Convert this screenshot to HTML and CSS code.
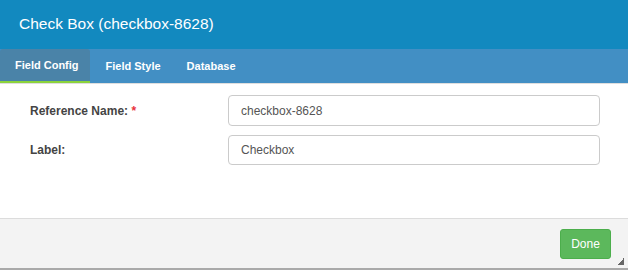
FILE: index.html
```html
<!DOCTYPE html>
<html lang="en">
<head>
  <meta charset="UTF-8" />
  <title>Check Box (checkbox-8628)</title>
  <link rel="stylesheet" href="styles.css">
</head>
<body>
  <div class="dialog">
    <header class="dlg-head">Check Box (checkbox-8628)</header>

    <nav class="tabs">
      <a class="tab active">Field Config</a>
      <a class="tab">Field Style</a>
      <a class="tab">Database</a>
    </nav>

    <main class="dlg-body">
      <div class="row">
        <label for="refName">Reference Name: <span class="req">*</span></label>
        <input type="text" id="refName" value="checkbox-8628" />
      </div>
      <div class="row">
        <label for="lbl">Label:</label>
        <input type="text" id="lbl" value="Checkbox" />
      </div>
    </main>

    <footer class="dlg-foot">
      <button class="btn-done">Done</button>
      <span class="grip"></span>
    </footer>
  </div>
</body>
</html>
```

FILE: styles.css
```css
/* ---------- base ---------- */
*,*::before,*::after{box-sizing:border-box;}
body{
  margin:0;
  font-family:"Liberation Sans",Arial,sans-serif;
  background:#fff;
  color:#333;
}

.dialog{
  width:628px;
  height:270px;
  display:flex;
  flex-direction:column;
  border-bottom:2px solid #a9a9a9;
}

/* ---------- header ---------- */
.dlg-head{
  height:49px;
  background:#1289bf;
  color:#fff;
  font-size:15.5px;
  line-height:47px;
  padding-left:19px;
}

/* ---------- tabs ---------- */
.tabs{
  height:35px;
  display:flex;
  background:#428fc4;
  border-bottom:1px solid #dedede;
}
.tab{
  padding:0 13px;
  line-height:34px;
  color:#fff;
  font-size:11px;
  font-weight:bold;
  white-space:nowrap;
  cursor:pointer;
}
.tab:nth-child(2){padding-left:16px;}
.tab.active{
  padding:0 11px 0 15px;
  background:#4a83a8;
  border-radius:3px 3px 0 0;
  border-bottom:2px solid #8bd33b;
  line-height:32px;
}

/* ---------- form ---------- */
.dlg-body{
  flex:1;
  padding:11px 28px 0 30px;
  display:flex;
  flex-direction:column;
  gap:9px;
}
.row{
  display:flex;
  align-items:center;
}
.row label{
  width:198px;
  font-size:12px;
  font-weight:bold;
  color:#444;
}
.req{color:#e8313b;}
.row input{
  flex:1;
  height:31px;
  padding:0 12px;
  border:1px solid #cbcbcb;
  border-radius:4px;
  font-family:inherit;
  font-size:12px;
  color:#555;
  outline:none;
}
.row:last-child input{height:30px;}

/* ---------- footer ---------- */
.dlg-foot{
  height:50px;
  background:#f3f3f3;
  border-top:1px solid #dcdcdc;
  display:flex;
  justify-content:flex-end;
  align-items:flex-start;
  padding:10px 17px 0 0;
  position:relative;
}
.btn-done{
  width:51px;
  height:30px;
  border:1px solid #4cae4c;
  border-radius:3px;
  background:#5cb85c;
  color:#fff;
  font-family:inherit;
  font-size:12px;
  cursor:pointer;
}
.grip{
  position:absolute;
  right:4px;
  bottom:3px;
  width:7px;
  height:7px;
  background:linear-gradient(135deg,transparent 50%,#666 50%);
}
```
